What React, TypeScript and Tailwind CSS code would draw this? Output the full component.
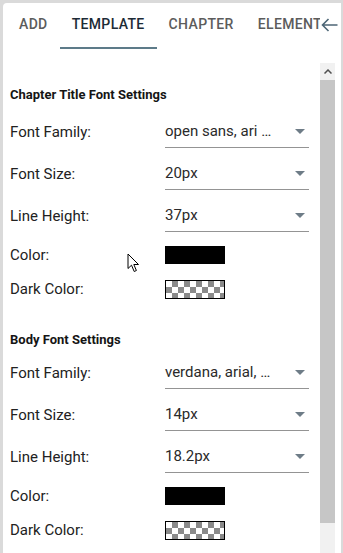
import React from "react";

const tabs = ["Add", "Template", "Chapter", "Elements"];

type Field = { label: string; value: string };

const sections: { title: string; fields: Field[]; headGap: string; top: string }[] = [
  {
    title: "Chapter Title Font Settings",
    top: "mt-[22px]",
    headGap: "mb-[11px]",
    fields: [
      { label: "Font Family:", value: "open sans, ari …" },
      { label: "Font Size:", value: "20px" },
      { label: "Line Height:", value: "37px" },
    ],
  },
  {
    title: "Body Font Settings",
    top: "mt-[24px]",
    headGap: "mb-[7px]",
    fields: [
      { label: "Font Family:", value: "verdana, arial, …" },
      { label: "Font Size:", value: "14px" },
      { label: "Line Height:", value: "18.2px" },
    ],
  },
];

function SelectRow({ label, value }: Field) {
  return (
    <div className="flex items-center h-[32px] mb-[10px]">
      <div className="w-[155px] text-[15px] text-[#222]">{label}</div>
      <div className="w-[144px] h-full flex items-center justify-between border-b border-[#949494] pr-[4px]">
        <span className="text-[15px] text-[#2a2a2a] whitespace-nowrap">{value}</span>
        <svg width="10" height="5" viewBox="0 0 10 5">
          <path d="M0 0 L10 0 L5 5 Z" fill="#6e7c87" />
        </svg>
      </div>
    </div>
  );
}

function ColorRow({ label, dark }: { label: string; dark?: boolean }) {
  return (
    <div className="flex items-center h-[34px]">
      <div className="w-[155px] text-[15px] text-[#222]">{label}</div>
      {dark ? (
        <div className="w-[60px] h-[19px] border border-black bg-[image:conic-gradient(#8a8a8a_25%,#fff_0_50%,#8a8a8a_0_75%,#fff_0)] bg-size-[12px_12px]" />
      ) : (
        <div className="w-[60px] h-[18px] bg-black" />
      )}
    </div>
  );
}

export default function App() {
  return (
    <div
      className="w-[343px] h-[553px] bg-[#dadada] pl-[3px] pt-[3px] pr-[2px] overflow-hidden"
      style={{ fontFamily: "Roboto, 'Noto Sans', sans-serif" }}
    >
      <div className="relative w-full h-full bg-white rounded-tl-[4px] flex flex-col">
        {/* tabs */}
        <div className="relative h-[46px] flex pl-[4px] overflow-hidden shrink-0">
          {tabs.map((t, i) => (
            <div
              key={t}
              className={`relative px-[12px] pb-[4px] flex items-center text-[14px] font-medium uppercase tracking-[0.35px] whitespace-nowrap ${
                i === 1 ? "text-[#1c2b36]" : "text-[#5c5c5c]"
              }`}
            >
              {t}
              {i === 1 && <div className="absolute left-0 right-0 bottom-0 h-[2px] bg-[#5d7b89]" />}
            </div>
          ))}
          <div className="absolute right-[3px] top-[13px] w-[18px] h-[18px] bg-white flex items-center justify-center">
            <svg width="17" height="14" viewBox="0 0 17 14">
              <path d="M16.5 7 H1.5 M7.5 1 L1.5 7 L7.5 13" stroke="#4d6676" strokeWidth="1.6" fill="none" />
            </svg>
          </div>
        </div>

        <div className="flex flex-1 mt-[14px] min-h-0">
          {/* content */}
          <div className="w-[317px] pl-[7px] pr-[11px]">
            {sections.map((s) => (
              <div key={s.title} className={s.top}>
                <div className={`h-[20px] flex items-center text-[13px] font-bold text-[#151515] ${s.headGap}`}>
                  {s.title}
                </div>
                {s.fields.map((f) => (
                  <SelectRow key={f.label} {...f} />
                ))}
                <div className="-mt-[4px]">
                  <ColorRow label="Color:" />
                  <ColorRow label="Dark Color:" dark />
                </div>
              </div>
            ))}
          </div>

          {/* scrollbar */}
          <div className="w-[15px] flex flex-col bg-[#f1f1f1]">
            <div className="h-[17px] flex items-center justify-center">
              <svg width="8" height="5" viewBox="0 0 8 5">
                <path d="M0.5 4.5 L4 1 L7.5 4.5" stroke="#505050" strokeWidth="1.5" fill="none" />
              </svg>
            </div>
            <div className="h-[443px] bg-[#c6c6c6]" />
          </div>
        </div>

        {/* mouse pointer */}
        <svg className="absolute left-[124px] top-[250px]" width="13" height="20" viewBox="0 0 13 20">
          <path
            d="M1 1 L1 15.5 L4.5 12.2 L7.2 18.5 L9.4 17.5 L6.8 11.5 L11.5 11.5 Z"
            fill="#fff"
            stroke="#000"
            strokeWidth="1"
            strokeLinejoin="round"
          />
        </svg>
      </div>
    </div>
  );
}
